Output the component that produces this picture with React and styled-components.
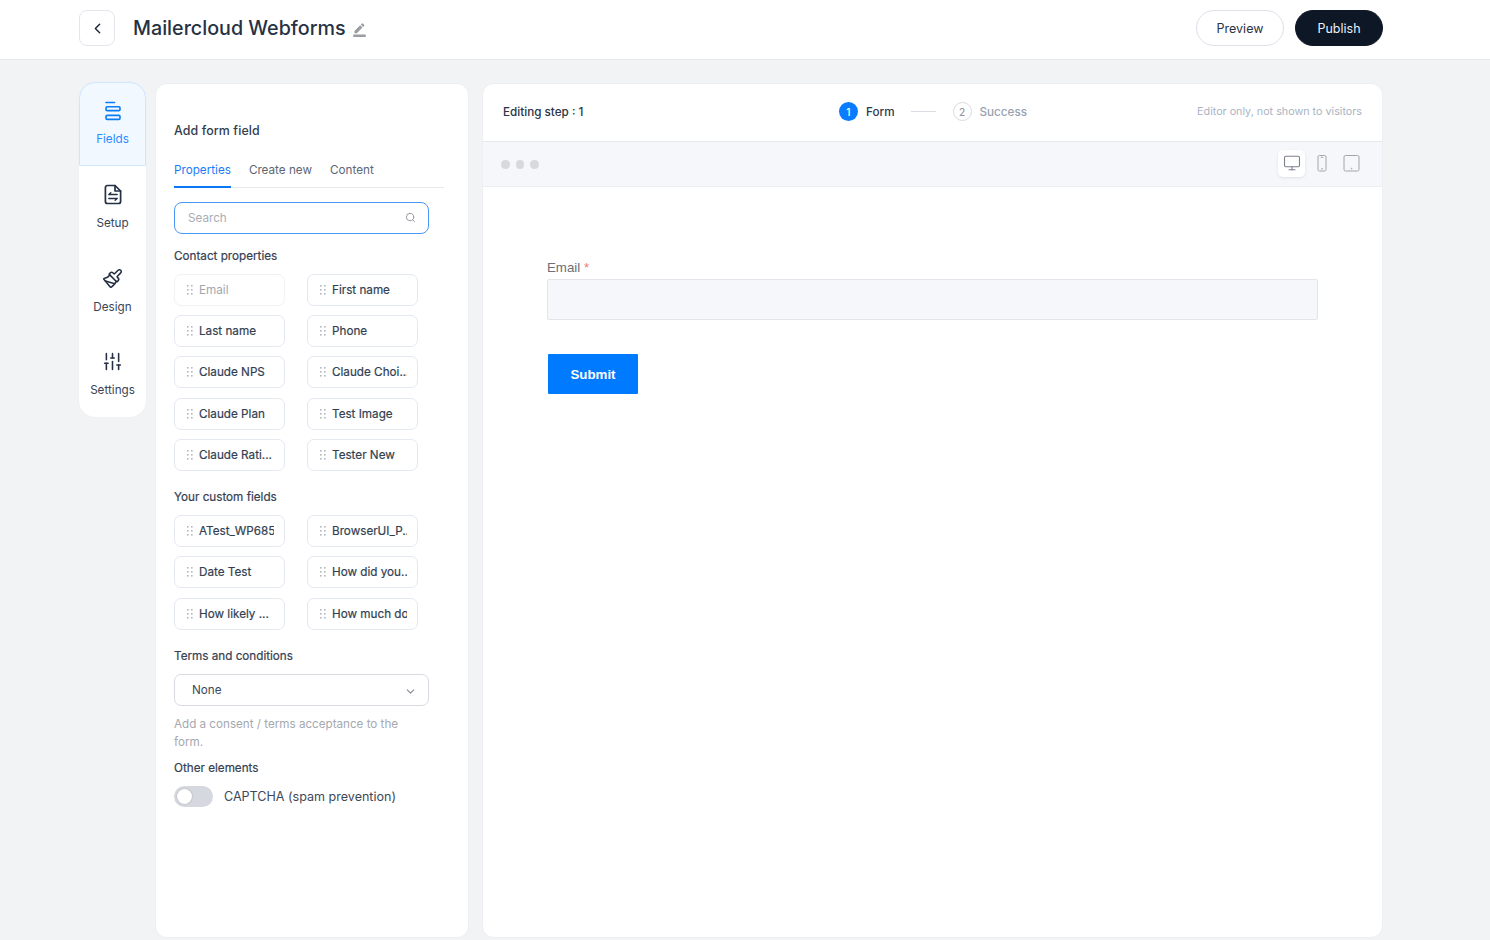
import React from 'react'
import styled, { createGlobalStyle } from 'styled-components'
import { ChevronLeft, ChevronDown, Search, Monitor, Paintbrush, SlidersVertical } from 'lucide-react'
import { MdBorderColor } from 'react-icons/md'

const GlobalStyle = createGlobalStyle`
  html, body { margin: 0; padding: 0; height: 100%; }
  body {
    background: #f2f3f5;
    font-family: Inter, "Liberation Sans", sans-serif;
    color: #1f2a3d;
    overflow: hidden;
  }
  * { box-sizing: border-box; }
`

const Page = styled.div`
  width: 1490px;
  height: 940px;
  display: flex;
  flex-direction: column;
`

const Header = styled.header`
  height: 60px;
  flex: none;
  background: #fff;
  border-bottom: 1px solid #e7e8ec;
  padding: 0 107px 3px 79px;
  display: flex;
  align-items: center;
  margin-bottom: 22px;
`

const BackButton = styled.button`
  width: 36px;
  height: 36px;
  border: 1px solid #e4e6eb;
  border-radius: 8px;
  background: #fff;
  color: #1b2538;
  padding: 0;
  display: flex;
  align-items: center;
  justify-content: center;
  margin-right: 18px;
`

const Title = styled.h1`
  margin: 0;
  font-size: 19.7px;
  line-height: 36px;
  font-weight: 500;
  color: #263244;
`

const EditIcon = styled(MdBorderColor)`
  color: #9a9ca3;
  font-size: 15px;
  margin: 3px 0 0 6px;
`

const HeaderActions = styled.div`
  margin-left: auto;
  display: flex;
  gap: 11px;
`

const PillButton = styled.button`
  height: 36px;
  width: 88px;
  border-radius: 18px;
  border: 1px solid ${p => (p.$dark ? '#0e1726' : '#dfe1e8')};
  background: ${p => (p.$dark ? '#0e1726' : '#fff')};
  color: ${p => (p.$dark ? '#e8f0fb' : '#2a3344')};
  font: 400 12.5px Inter, sans-serif;
  padding: 0;
`

const Body = styled.div`
  flex: 1;
  min-height: 0;
  display: flex;
  padding: 0 107px 3px 79px;
  align-items: flex-start;
`

const Rail = styled.nav`
  width: 67px;
  flex: none;
  background: #fff;
  border-radius: 16px;
  margin-right: 9px;
  box-shadow: 0 0 1px rgba(20, 30, 50, 0.08);
`

const RailItem = styled.div`
  height: 83.75px;
  display: flex;
  flex-direction: column;
  align-items: center;
  padding-top: 18px;
  gap: 10px;
  font-size: 11.7px;
  line-height: 16px;
  color: ${p => (p.$active ? '#2b8cff' : '#3a4557')};
  background: ${p => (p.$active ? '#f1f8ff' : 'transparent')};
  border: ${p => (p.$active ? '1px solid #cfe6fd' : '0')};
  border-radius: ${p => (p.$active ? '16px 16px 0 0' : '0')};
  svg { display: block; flex: none; }
`

const Panel = styled.aside`
  width: 314px;
  height: 855px;
  flex: none;
  margin-top: 1px;
  margin-right: 13px;
  background: #fff;
  border: 1px solid #eeeff2;
  border-radius: 12px;
  padding: 39px 24px 0 18px;
`

const PanelTitle = styled.h2`
  margin: 0 0 20px;
  font-size: 12.4px;
  line-height: 16px;
  font-weight: 500;
  letter-spacing: 0.1px;
  color: #323c4d;
`

const Tabs = styled.div`
  display: flex;
  gap: 18px;
  border-bottom: 1px solid #e8e9ed;
  margin-bottom: 14px;
`

const Tab = styled.div`
  font-size: 11.7px;
  line-height: 16px;
  padding-top: 3px;
  color: ${p => (p.$active ? '#1b7cf5' : '#5d6674')};
  font-weight: 400;
  margin-bottom: ${p => (p.$active ? '-1px' : '0')};
  height: ${p => (p.$active ? '29px' : '28px')};
  border-bottom: ${p => (p.$active ? '2px solid #0a78f5' : '0')};
`

const SearchBox = styled.div`
  width: 255px;
  height: 32px;
  border: 1px solid #4a97f5;
  border-radius: 8px;
  padding: 0 11px 0 13px;
  display: flex;
  align-items: center;
  justify-content: space-between;
  font-size: 11.7px;
  color: #a9adb5;
  margin-bottom: 14.2px;
  svg { color: #8f949d; margin: -1px 1px 0 0; }
`

const SectionLabel = styled.div`
  font-size: 11.7px;
  line-height: 16px;
  font-weight: 400;
  -webkit-text-stroke: 0.2px currentColor;
  color: #354052;
  margin-bottom: 9.7px;
`

const ChipGrid = styled.div`
  display: grid;
  grid-template-columns: 111px 111px;
  column-gap: 22px;
  row-gap: 9.25px;
  margin-bottom: 18.6px;
`

const ChipBox = styled.div`
  height: 32px;
  border: 1px solid ${p => (p.$disabled ? '#f1f2f5' : '#e4e8f0')};
  border-radius: 7px;
  padding: 0 10px 0 12px;
  display: flex;
  align-items: center;
  gap: 6px;
  font-size: 11.7px;
  color: ${p => (p.$disabled ? '#a2a6ad' : '#323f52')};
  -webkit-text-stroke: ${p => (p.$disabled ? '0' : '0.2px currentColor')};
  svg { flex: none; }
`

const ChipText = styled.span`
  flex: 1;
  min-width: 0;
  white-space: nowrap;
  overflow: hidden;
`

const SelectBox = styled.div`
  width: 255px;
  height: 32px;
  border: 1px solid #d8dbe2;
  border-radius: 7px;
  padding: 0 11px 0 17px;
  display: flex;
  align-items: center;
  justify-content: space-between;
  font-size: 11.7px;
  color: #3b475a;
  svg { color: #858a93; margin-top: 3px; }
`

const HelpText = styled.p`
  width: 250px;
  margin: 9px 0 9px;
  font-size: 11.65px;
  line-height: 18px;
  color: #a6a9b0;
`

const ToggleRow = styled.div`
  display: flex;
  align-items: center;
  gap: 11px;
  font-size: 12.55px;
  color: #3d4859;
`

const Toggle = styled.span`
  width: 39px;
  height: 21px;
  border-radius: 11px;
  background: #d5d8de;
  display: flex;
  align-items: center;
  padding-left: 3px;
  &::before {
    content: '';
    width: 15px;
    height: 15px;
    border-radius: 50%;
    background: #fff;
    box-shadow: 0 0 2px rgba(0, 0, 0, 0.25);
  }
`

const Main = styled.main`
  width: 901px;
  height: 855px;
  flex: none;
  margin-top: 1px;
  background: #fff;
  border: 1px solid #eeeff2;
  border-radius: 12px;
  overflow: hidden;
`

const StepBar = styled.div`
  height: 58px;
  padding: 0 20px 2px 20px;
  border-bottom: 1px solid #e8e9ee;
  display: grid;
  grid-template-columns: 1fr auto 1fr;
  align-items: center;
  font-size: 11.7px;
`

const StepLabel = styled.div`
  font-weight: 500;
  color: #2a3546;
`

const Stepper = styled.div`
  display: flex;
  align-items: center;
  margin-left: 1px;
`

const StepDot = styled.span`
  width: 19px;
  height: 19px;
  border-radius: 50%;
  font-size: 10px;
  font-weight: 500;
  display: flex;
  align-items: center;
  justify-content: center;
  background: ${p => (p.$active ? '#0a7cff' : '#fff')};
  color: ${p => (p.$active ? '#fff' : '#8f97a6')};
  border: ${p => (p.$active ? '0' : '1px solid #d9dce3')};
  margin-right: 8px;
`

const StepName = styled.span`
  font-weight: 500;
  color: ${p => (p.$active ? '#2d3848' : '#98a1b1')};
`

const StepLine = styled.span`
  width: 25px;
  height: 1px;
  background: #d9dce3;
  margin: 0 17px 0 16px;
`

const StepNote = styled.div`
  justify-self: end;
  font-size: 10.75px;
  color: #abb3c2;
`

const Toolbar = styled.div`
  height: 45px;
  background: #f6f7fa;
  border-bottom: 1px solid #eceef2;
  padding: 0 17px 0 18px;
  display: flex;
  align-items: center;
  gap: 6px;
`

const WindowDot = styled.span`
  width: 8.5px;
  height: 8.5px;
  border-radius: 50%;
  background: #d6d9de;
  margin-top: 1px;
`

const DeviceGroup = styled.div`
  margin-left: auto;
  display: flex;
  align-items: center;
  gap: 3px;
  margin-top: -2px;
`

const DeviceButton = styled.div`
  width: 27px;
  height: 27px;
  border-radius: 5px;
  display: flex;
  align-items: center;
  justify-content: center;
  color: #7d7f8b;
  background: ${p => (p.$active ? '#fff' : 'transparent')};
  box-shadow: ${p => (p.$active ? '0 1px 3px rgba(20, 30, 50, 0.1)' : 'none')};
  svg { display: block; }
`

const Form = styled.form`
  padding: 73px 64px 0 64px;
  font-family: "Liberation Sans", Arial, sans-serif;
`

const FieldLabel = styled.label`
  display: block;
  font-size: 13.3px;
  line-height: 16px;
  color: #6c6f78;
  margin-bottom: 3px;
  span { color: #f07a7a; }
`

const FieldInput = styled.div`
  height: 41px;
  width: 771px;
  background: #f6f7fb;
  border: 1px solid #e3e5ea;
  border-radius: 2px;
  margin-bottom: 34px;
`

const SubmitButton = styled.button`
  display: block;
  width: 90px;
  height: 40px;
  margin-left: 1px;
  border: 0;
  border-radius: 1px;
  background: #007bff;
  color: #fff;
  font: 700 13.3px "Liberation Sans", Arial, sans-serif;
  padding: 0;
`

function FieldsIcon() {
  return (
    <svg width="18" height="20" viewBox="0 0 18 20" fill="none" stroke="#0a7cf5" strokeWidth="1.6" strokeLinecap="round">
      <path d="M2 1.5h8.5" />
      <rect x="2" y="5.8" width="14" height="3.8" rx="1.2" />
      <rect x="2" y="14.4" width="14" height="4" rx="1.2" />
    </svg>
  )
}

function SetupIcon() {
  return (
    <svg width="18" height="21" viewBox="0 0 18 21" fill="none" stroke="#253044" strokeWidth="1.7" strokeLinecap="round" strokeLinejoin="round">
      <path d="M11 1.5H3.4A2 2 0 0 0 1.4 3.5v14a2 2 0 0 0 2 2h11.2a2 2 0 0 0 2-2V7z" />
      <path d="M11 1.5V7h5.6" />
      <path d="M4.8 10.5h8.4M6.8 8.8l-2 1.7M4.8 14.5h8.4M11.2 16.2l2-1.7" strokeWidth="1.4" />
    </svg>
  )
}

function DragDots() {
  return (
    <svg width="6" height="10" viewBox="0 0 6 10" fill="#b4b8c0">
      {[0, 4, 8].map(y => (
        <React.Fragment key={y}>
          <rect x="0" y={y} width="1.6" height="1.6" />
          <rect x="4" y={y} width="1.6" height="1.6" />
        </React.Fragment>
      ))}
    </svg>
  )
}

function PhoneIcon() {
  return (
    <svg width="10" height="17" viewBox="0 0 10 17" fill="none" stroke="#a2a4ae" strokeWidth="1">
      <rect x="1" y="0.5" width="8" height="15.5" rx="1.5" />
      <path d="M3.8 2.3h2.4" />
      <circle cx="5" cy="13.8" r="0.4" />
    </svg>
  )
}

function TabletIcon() {
  return (
    <svg width="17" height="17" viewBox="0 0 17 17" fill="none" stroke="#a2a4ae" strokeWidth="1">
      <rect x="1" y="0.5" width="15" height="15.5" rx="1.5" />
      <circle cx="8.5" cy="13.6" r="0.4" />
    </svg>
  )
}

function Chip({ label, disabled }) {
  return (
    <ChipBox $disabled={disabled}>
      <DragDots />
      <ChipText>{label}</ChipText>
    </ChipBox>
  )
}

// long names are shortened to 11 characters plus dots, then clipped by the chip
const contactFields = [
  { label: 'Email', disabled: true },
  { label: 'First name' },
  { label: 'Last name' },
  { label: 'Phone' },
  { label: 'Claude NPS' },
  { label: 'Claude Choi...' },
  { label: 'Claude Plan' },
  { label: 'Test Image' },
  { label: 'Claude Rati...' },
  { label: 'Tester New' },
]

const customFields = [
  { label: 'ATest_WP685...' },
  { label: 'BrowserUI_P...' },
  { label: 'Date Test' },
  { label: 'How did you...' },
  { label: 'How likely ...' },
  { label: 'How much do...' },
]

export default function App() {
  return (
    <Page>
      <GlobalStyle />
      <Header>
        <BackButton><ChevronLeft size={17} strokeWidth={2} /></BackButton>
        <Title>Mailercloud Webforms</Title>
        <EditIcon />
        <HeaderActions>
          <PillButton>Preview</PillButton>
          <PillButton $dark>Publish</PillButton>
        </HeaderActions>
      </Header>
      <Body>
        <Rail>
          <RailItem $active><FieldsIcon />Fields</RailItem>
          <RailItem><SetupIcon />Setup</RailItem>
          <RailItem><Paintbrush size={21} strokeWidth={1.8} color="#253044" />Design</RailItem>
          <RailItem><SlidersVertical size={21} strokeWidth={1.8} color="#253044" />Settings</RailItem>
        </Rail>
        <Panel>
          <PanelTitle>Add form field</PanelTitle>
          <Tabs>
            <Tab $active>Properties</Tab>
            <Tab>Create new</Tab>
            <Tab>Content</Tab>
          </Tabs>
          <SearchBox>Search<Search size={11} /></SearchBox>
          <SectionLabel>Contact properties</SectionLabel>
          <ChipGrid>
            {contactFields.map(f => <Chip key={f.label} {...f} />)}
          </ChipGrid>
          <SectionLabel>Your custom fields</SectionLabel>
          <ChipGrid>
            {customFields.map(f => <Chip key={f.label} {...f} />)}
          </ChipGrid>
          <SectionLabel>Terms and conditions</SectionLabel>
          <SelectBox>None<ChevronDown size={13} strokeWidth={2} /></SelectBox>
          <HelpText>Add a consent / terms acceptance to the form.</HelpText>
          <SectionLabel>Other elements</SectionLabel>
          <ToggleRow><Toggle />CAPTCHA (spam prevention)</ToggleRow>
        </Panel>
        <Main>
          <StepBar>
            <StepLabel>Editing step : 1</StepLabel>
            <Stepper>
              <StepDot $active>1</StepDot>
              <StepName $active>Form</StepName>
              <StepLine />
              <StepDot>2</StepDot>
              <StepName>Success</StepName>
            </Stepper>
            <StepNote>Editor only, not shown to visitors</StepNote>
          </StepBar>
          <Toolbar>
            <WindowDot />
            <WindowDot />
            <WindowDot />
            <DeviceGroup>
              <DeviceButton $active><Monitor size={18} strokeWidth={1.5} /></DeviceButton>
              <DeviceButton><PhoneIcon /></DeviceButton>
              <DeviceButton><TabletIcon /></DeviceButton>
            </DeviceGroup>
          </Toolbar>
          <Form>
            <FieldLabel>Email <span>*</span></FieldLabel>
            <FieldInput />
            <SubmitButton type="button">Submit</SubmitButton>
          </Form>
        </Main>
      </Body>
    </Page>
  )
}
